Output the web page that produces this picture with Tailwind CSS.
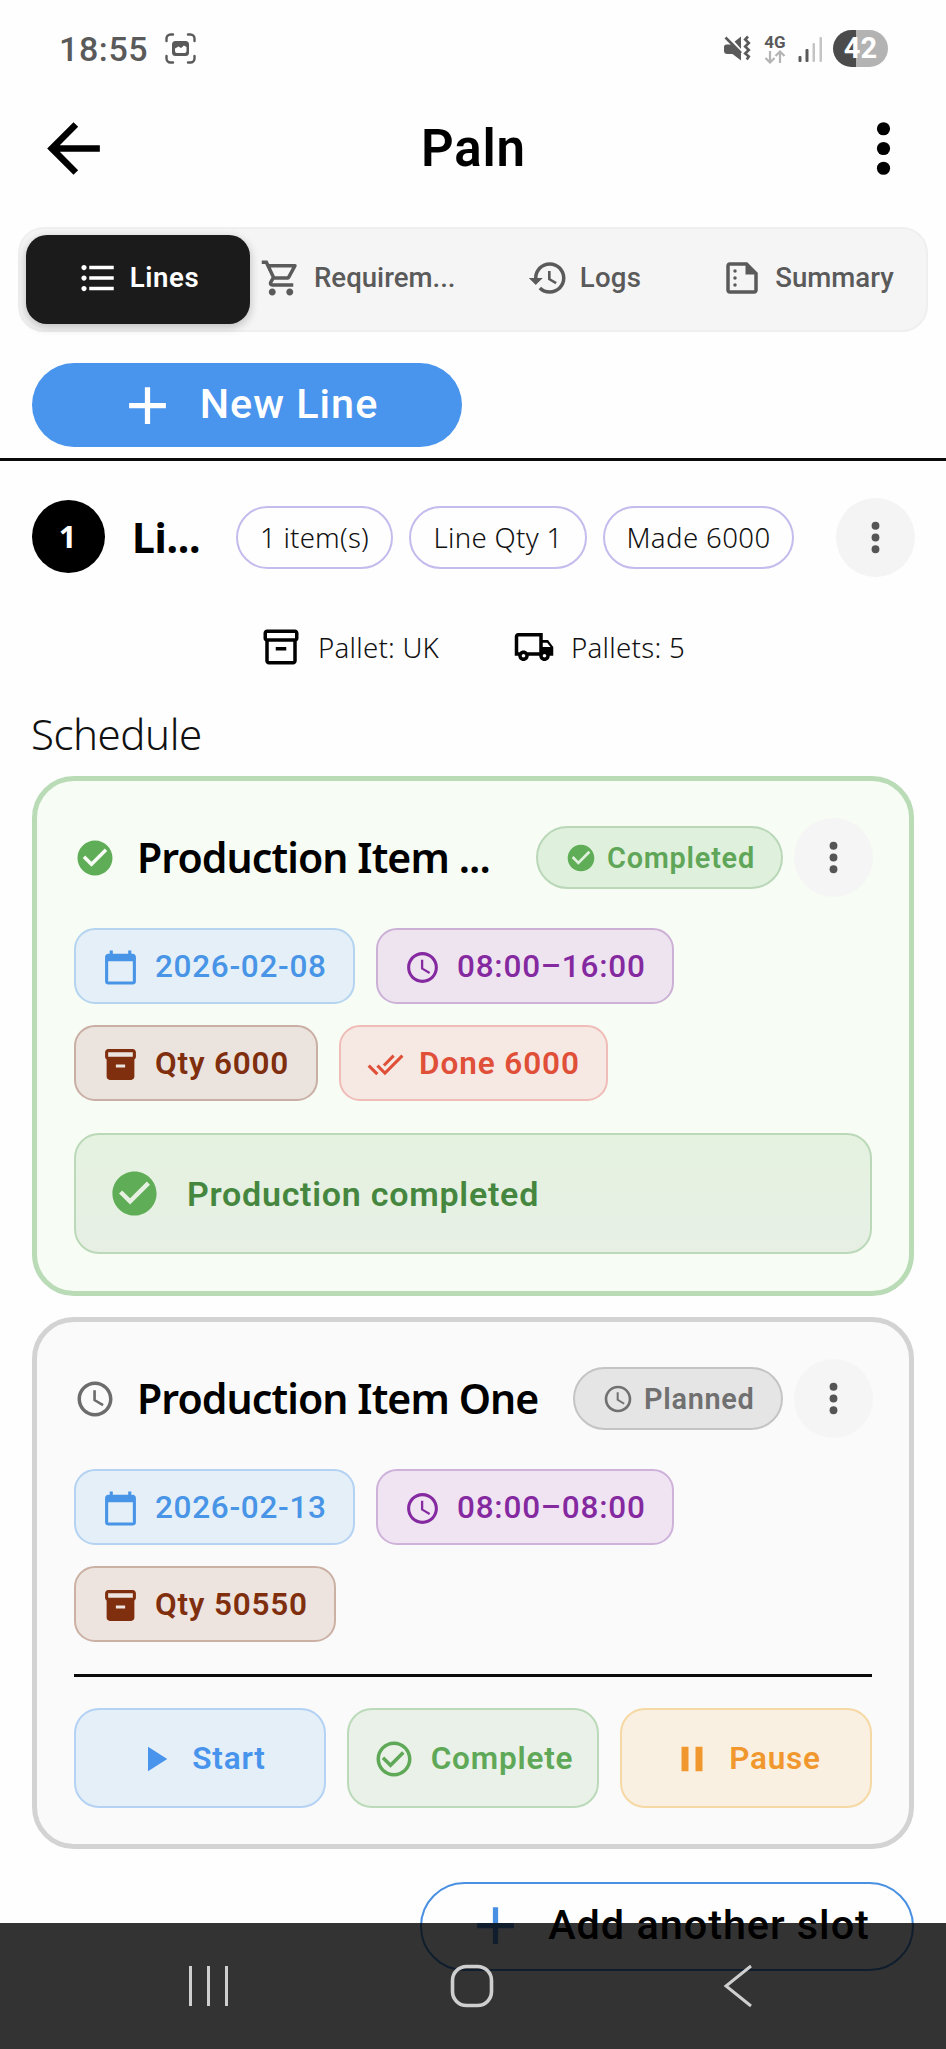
<!DOCTYPE html>
<html lang="en">
<head>
<meta charset="utf-8">
<title>Paln</title>
<script src="https://cdn.jsdelivr.net/npm/@tailwindcss/browser@4"></script>
</head>
<body class="bg-white">
<svg class="hidden" aria-hidden="true">
  <symbol id="back" viewBox="0 0 24 24"><path d="M20 11H7.83l5.59-5.59L12 4l-8 8 8 8 1.41-1.41L7.83 13H20v-2z"/></symbol>
  <symbol id="more" viewBox="0 0 24 24"><circle cx="12" cy="6" r="2"/><circle cx="12" cy="12" r="2"/><circle cx="12" cy="18" r="2"/></symbol>
  <symbol id="list" viewBox="0 0 24 24"><path d="M4 10.5c-.83 0-1.5.67-1.5 1.5s.67 1.5 1.5 1.5 1.5-.67 1.5-1.5-.67-1.5-1.5-1.5zm0-6c-.83 0-1.5.67-1.5 1.5S3.17 7.5 4 7.5 5.5 6.83 5.5 6 4.83 4.5 4 4.5zm0 12c-.83 0-1.5.68-1.5 1.5s.68 1.5 1.5 1.5 1.5-.68 1.5-1.5-.67-1.5-1.5-1.5zM7 19h14v-2H7v2zm0-6h14v-2H7v2zm0-8v2h14V5H7z"/></symbol>
  <symbol id="cart" viewBox="0 0 24 24"><path d="M15.55 13c.75 0 1.41-.41 1.75-1.03l3.58-6.49c.37-.66-.11-1.48-.87-1.48H5.21l-.94-2H1v2h2l3.6 7.59-1.35 2.44C4.52 15.37 5.48 17 7 17h12v-2H7l1.1-2h7.45zM6.16 6h12.15l-2.76 5H8.53L6.16 6zM7 18c-1.1 0-1.99.9-1.99 2S5.9 22 7 22s2-.9 2-2-.9-2-2-2zm10 0c-1.1 0-1.99.9-1.99 2s.89 2 1.99 2 2-.9 2-2-.9-2-2-2z"/></symbol>
  <symbol id="history" viewBox="0 0 24 24"><path d="M13 3c-4.97 0-9 4.03-9 9H1l3.89 3.89.07.14L9 12H6c0-3.87 3.13-7 7-7s7 3.13 7 7-3.13 7-7 7c-1.93 0-3.68-.79-4.94-2.06l-1.42 1.42C8.27 19.99 10.51 21 13 21c4.97 0 9-4.03 9-9s-4.03-9-9-9zm-1 5v5l4.28 2.54.72-1.21-3.5-2.08V8H12z"/></symbol>
  <symbol id="summary" viewBox="0 0 24 24"><path d="M15 3H5c-1.1 0-1.99.9-1.99 2L3 19c0 1.1.89 2 1.99 2H19c1.1 0 2-.9 2-2V9l-6-6zM5 19V5h9v5h5v9H5z"/><circle cx="8" cy="8" r="1"/><circle cx="8" cy="12" r="1"/><circle cx="8" cy="16" r="1"/></symbol>
  <symbol id="add" viewBox="0 0 24 24"><path d="M19 13h-6v6h-2v-6H5v-2h6V5h2v6h6v2z"/></symbol>
  <symbol id="box" viewBox="0 0 24 24"><path d="M20 2H4c-1 0-2 .9-2 2v3.01c0 .72.43 1.34 1 1.69V20c0 1.1 1.1 2 2 2h14c.9 0 2-.9 2-2V8.7c.57-.35 1-.97 1-1.69V4c0-1.1-1-2-2-2zm-1 18H5V9h14v11zm1-13H4V4h16v3z"/><path d="M9 12h6v2H9z"/></symbol>
  <symbol id="boxfill" viewBox="0 0 24 24"><path d="M20 2H4c-1 0-2 .9-2 2v3.01c0 .72.43 1.34 1 1.69V20c0 1.1 1.1 2 2 2h14c.9 0 2-.9 2-2V8.7c.57-.35 1-.97 1-1.69V4c0-1.1-1-2-2-2zm-5 12H9v-2h6v2zm5-7H4V4h16v3z"/></symbol>
  <symbol id="truck" viewBox="0 0 24 24"><path d="M20 8h-3V4H3c-1.1 0-2 .9-2 2v11h2c0 1.66 1.34 3 3 3s3-1.34 3-3h6c0 1.66 1.34 3 3 3s3-1.34 3-3h2v-5l-3-4zm-.5 1.5l1.96 2.5H17V9.5h2.5zM6 18c-.55 0-1-.45-1-1s.45-1 1-1 1 .45 1 1-.45 1-1 1zm2.22-3c-.55-.61-1.33-1-2.22-1s-1.67.39-2.22 1H3V6h12v9H8.22zM18 18c-.55 0-1-.45-1-1s.45-1 1-1 1 .45 1 1-.45 1-1 1z"/></symbol>
  <symbol id="check" viewBox="0 0 24 24"><path d="M12 2C6.48 2 2 6.48 2 12s4.48 10 10 10 10-4.48 10-10S17.52 2 12 2zm-2 15l-5-5 1.41-1.41L10 14.17l7.59-7.59L19 8l-9 9z"/></symbol>
  <symbol id="checkline" viewBox="0 0 24 24"><path d="M16.59 7.58L10 14.17l-3.59-3.58L5 12l5 5 8-8zM12 2C6.48 2 2 6.48 2 12s4.48 10 10 10 10-4.48 10-10S17.52 2 12 2zm0 18c-4.42 0-8-3.58-8-8s3.58-8 8-8 8 3.58 8 8-3.58 8-8 8z"/></symbol>
  <symbol id="clock" viewBox="0 0 24 24"><path d="M11.99 2C6.47 2 2 6.48 2 12s4.47 10 9.99 10C17.52 22 22 17.52 22 12S17.52 2 11.99 2zM12 20c-4.42 0-8-3.58-8-8s3.58-8 8-8 8 3.58 8 8-3.58 8-8 8zm.5-13H11v6l5.25 3.15.75-1.23-4.5-2.67V7z"/></symbol>
  <symbol id="calendar" viewBox="0 0 24 24"><path d="M20 3h-1V1h-2v2H7V1H5v2H4c-1.1 0-2 .9-2 2v16c0 1.1.9 2 2 2h16c1.1 0 2-.9 2-2V5c0-1.1-.9-2-2-2zm0 18H4V8h16v13z"/></symbol>
  <symbol id="doneall" viewBox="0 0 24 24"><path d="M18 7l-1.41-1.41-6.34 6.34 1.41 1.41L18 7zm4.24-1.41L11.66 16.17 7.48 12l-1.41 1.41L11.66 19l12-12-1.42-1.41zM.41 13.41L6 19l1.41-1.41L1.83 12 .41 13.41z"/></symbol>
  <symbol id="play" viewBox="0 0 24 24"><path d="M8 5v14l11-7z"/></symbol>
  <symbol id="pause" viewBox="0 0 24 24"><path d="M6 19h4V5H6v14zm8-14v14h4V5h-4z"/></symbol>
</svg>

<div class="relative h-[2049px] w-[946px] overflow-hidden bg-[#fefefe] font-['Roboto',sans-serif] whitespace-nowrap">

  <!-- status bar -->
  <div class="flex h-[97px] items-center pl-[59px] pr-[58px] text-[#5a5a5a]">
    <span class="w-[106px] text-[34px] leading-none font-medium tracking-[0.6px]">18:55</span>
    <svg class="size-[31px]" viewBox="0 0 31 31" fill="none" stroke="currentColor" stroke-width="2.4" stroke-linecap="round"><path d="M1.5 8V5.500a4 4 0 0 1 4-4H8M23 1.500h2.500a4 4 0 0 1 4 4V8M29.500 23v2.500a4 4 0 0 1-4 4H23M8 29.500H5.500a4 4 0 0 1-4-4V23"/><rect x="7" y="8" width="17" height="15" rx="3.500" fill="currentColor" stroke="none"/><path d="M10 15.500l3.500-2 2.500 1.500 3-2.500 2.500 1.500v4q0 2-2 2h-7.500q-2 0-2-2z" fill="#fefefe" stroke="none"/></svg>
    <div class="ml-auto flex items-center">
      <svg class="h-[27px] w-[28px]" viewBox="0 0 28 27"><path d="M1 12q0-2.500 2.500-2.500H8l10-8v24L9.500 19H4.500Q1 19 1 16z" fill="currentColor"/><path d="M2 -2L20 18.500" stroke="#fefefe" stroke-width="3"/><path d="M2.500 2.500L18 18" stroke="currentColor" stroke-width="2.600"/><path d="M25 1.500l-2.800 3 3.600 3.500-3.600 3.500 3.600 3.500-3.600 3.500 3.600 3-2 3" fill="none" stroke="currentColor" stroke-width="2.600"/></svg>
      <div class="ml-[12px] flex w-[24px] flex-col items-center">
        <span class="text-[17px] leading-[16px] font-bold">4G</span>
        <svg class="h-[14px] w-[22px]" viewBox="0 0 22 14" fill="none" stroke="#b4b4b4" stroke-width="2.200"><path d="M6 1v11M1.500 8L6 12.500 10.500 8M16 13V2M11.500 6L16 1.500 20.500 6"/></svg>
      </div>
      <svg class="ml-[11px] h-[26px] w-[25px]" viewBox="0 0 25 26"><rect x="0.500" y="20" width="3" height="6" rx="1" fill="#5a5a5a"/><rect x="7.500" y="13" width="3" height="13" rx="1" fill="#5a5a5a"/><rect x="14.500" y="7" width="2.500" height="19" rx="1" fill="#c4c4c4"/><rect x="21.500" y="1" width="2.500" height="25" rx="1" fill="#c4c4c4"/></svg>
      <div class="ml-[10px] flex h-[37px] w-[55px] items-center justify-center rounded-full bg-linear-to-r from-[#4b4b4b] from-42% to-[#b3b3b3] to-42% text-[29px] leading-none font-bold text-white">42</div>
    </div>
  </div>

  <!-- app bar -->
  <div class="flex h-[102px] items-center justify-between pl-[34px] pr-[23px]">
    <svg class="size-[79px]"><use href="#back"/></svg>
    <h1 class="pr-[10px] text-[51px] leading-none font-semibold tracking-[0.8px]">Paln</h1>
    <svg class="size-[79px]"><use href="#more"/></svg>
  </div>

  <!-- tabs -->
  <div class="mx-[18px] mt-[28px] flex h-[105px] items-center rounded-[26px] border-2 border-[#efefef] bg-[#f5f5f5] px-[6px] text-[27.6px] leading-none font-medium text-[#5a5a5a]">
    <div class="flex h-[89px] w-[224px] items-center justify-center gap-[11px] rounded-[21px] bg-[#1b1b1b] pb-[4px] font-semibold tracking-[0.6px] text-white shadow-[0_3px_9px_1px_rgba(0,0,0,0.2)]"><svg class="size-[42px] fill-current"><use href="#list"/></svg>Lines</div>
    <div class="flex w-[223px] items-center gap-[12px] pb-[4px] pl-[10px]"><svg class="size-[42px] fill-current"><use href="#cart"/></svg>Requirem...</div>
    <div class="flex w-[222px] items-center justify-center gap-[11px] pb-[4px] tracking-[0.27px]"><svg class="size-[42px] fill-current"><use href="#history"/></svg>Logs</div>
    <div class="flex flex-1 items-center justify-center gap-[12px] pb-[4px]"><svg class="size-[42px] fill-current"><use href="#summary"/></svg>Summary</div>
  </div>

  <button class="mt-[31px] ml-[32px] flex h-[84px] w-[430px] items-center justify-center gap-[21px] rounded-full bg-[#4994ec] text-[41.4px] leading-none font-medium tracking-[1px] text-white"><svg class="size-[63px] fill-current"><use href="#add"/></svg>New Line</button>
  <div class="mt-[11px] h-[3px] bg-[#0a0a0a]"></div>

  <!-- line header -->
  <div class="mt-[37px] flex h-[79px] items-center pl-[32px] pr-[31px] font-['Noto_Sans',sans-serif]">
    <div class="mb-[2px] flex size-[73px] items-center justify-center rounded-full bg-black pr-[2px] text-[31px] leading-none font-bold text-white">1</div>
    <div class="ml-[27px] w-[104px] text-[41px] leading-none font-bold tracking-[-0.3px]">Li...</div>
    <div class="flex gap-[16px] text-[27.6px] leading-none font-light text-[#111]">
      <div class="flex h-[63px] w-[157px] items-center justify-center rounded-full border-[2.6px] border-[#c5bbec] tracking-[0.22px]">1 item(s)</div>
      <div class="flex h-[63px] w-[178px] items-center justify-center rounded-full border-[2.6px] border-[#c5bbec] tracking-[0.3px]">Line Qty 1</div>
      <div class="flex h-[63px] w-[191px] items-center justify-center rounded-full border-[2.6px] border-[#c5bbec] tracking-[0.37px]">Made 6000</div>
    </div>
    <div class="ml-auto flex size-[79px] items-center justify-center rounded-full bg-[#f4f4f4]"><svg class="size-[47px] fill-[#555]"><use href="#more"/></svg></div>
  </div>

  <div class="mt-[49px] flex h-[42px] items-center pl-[260px] font-['Noto_Sans',sans-serif] text-[27.6px] leading-none font-light text-[#111]">
    <svg class="mr-[16px] size-[42px]"><use href="#box"/></svg><span class="w-[195px] pt-[2px] tracking-[0.25px]">Pallet: UK</span>
    <svg class="mr-[16px] size-[42px]"><use href="#truck"/></svg><span class="pt-[2px] tracking-[0.29px]">Pallets: 5</span>
  </div>

  <h2 class="mt-[36px] ml-[31px] h-[60px] font-['Noto_Sans',sans-serif] text-[42px] leading-[60px] font-light tracking-[-0.45px] text-[#111]">Schedule</h2>

  <!-- completed slot -->
  <section class="mx-[32px] mt-[12px] h-[520px] rounded-[42px] border-[5px] border-[#b9dbb6] bg-[#f7fcf5] px-[37px] pt-[37px]">
    <div class="flex h-[79px] items-center">
      <svg class="size-[42px] fill-[#5fad56]"><use href="#check"/></svg>
      <h3 class="ml-[21px] font-['Noto_Sans',sans-serif] text-[41px] leading-none font-semibold tracking-[-0.9px] text-black">Production Item ...</h3>
      <div class="ml-auto flex h-[63px] w-[247px] items-center gap-[10px] rounded-full border-2 border-[#bad7b8] bg-[#dff0dd] pt-[1px] pl-[27px] text-[28.9px] leading-none font-semibold tracking-[0.75px] text-[#5fa658]"><svg class="size-[32px] fill-[#5fad56]"><use href="#check"/></svg>Completed</div>
      <div class="-mr-px ml-[11px] flex size-[79px] items-center justify-center rounded-full bg-[#f5f5f5]"><svg class="size-[47px] fill-[#555]"><use href="#more"/></svg></div>
    </div>
    <div class="mt-[31px] flex flex-wrap gap-[21px] text-[31.5px] leading-none font-medium">
      <div class="flex h-[76px] w-[281px] items-center gap-[16px] rounded-[21px] border-2 border-[#b4d4f0] bg-[#e4eff7] pt-[2px] pl-[26px] tracking-[0.7px] text-[#4894e6]"><svg class="size-[37px] fill-current"><use href="#calendar"/></svg>2026-02-08</div>
      <div class="flex h-[76px] w-[298px] items-center gap-[16px] rounded-[21px] border-2 border-[#ccb0d6] bg-[#eee4f0] pt-[2px] pl-[26px] tracking-[0.78px] text-[#8529a0]"><svg class="size-[37px] fill-current"><use href="#clock"/></svg>08:00–16:00</div>
      <div class="flex h-[76px] w-[244px] items-center gap-[16px] rounded-[21px] border-2 border-[#c9aea4] bg-[#ebe4de] pt-[2px] pl-[26px] font-semibold tracking-[0.8px] text-[#7f2f0e]"><svg class="size-[37px] fill-current"><use href="#boxfill"/></svg>Qty 6000</div>
      <div class="flex h-[76px] w-[269px] items-center gap-[15px] rounded-[21px] border-2 border-[#f0bcb8] bg-[#f6e9e4] pt-[2px] pl-[26px] font-semibold tracking-[0.91px] text-[#e04f38]"><svg class="size-[37px] fill-current"><use href="#doneall"/></svg>Done 6000</div>
    </div>
    <div class="mt-[32px] flex h-[121px] items-center gap-[26px] rounded-[25px] border-2 border-[#bbd9b9] bg-linear-to-b from-[#e5f2e0] to-[#e7efe5] pl-[32px] text-[34px] leading-none font-semibold tracking-[0.74px] text-[#468740]"><svg class="size-[53px] fill-[#5fad56]"><use href="#check"/></svg>Production completed</div>
  </section>

  <!-- planned slot -->
  <section class="mx-[32px] mt-[21px] h-[532px] rounded-[42px] border-[5px] border-[#d3d3d3] bg-[#fafafa] px-[37px] pt-[37px]">
    <div class="flex h-[79px] items-center">
      <svg class="size-[42px] fill-[#6c6c6c]"><use href="#clock"/></svg>
      <h3 class="ml-[21px] font-['Noto_Sans',sans-serif] text-[41px] leading-none font-semibold tracking-[-0.9px] text-black">Production Item One</h3>
      <div class="ml-auto flex h-[63px] w-[210px] items-center gap-[10px] rounded-full border-2 border-[#c4c4c4] bg-[#e5e5e5] pt-[1px] pl-[27px] text-[28.9px] leading-none font-semibold tracking-[0.7px] text-[#707070]"><svg class="size-[32px] fill-current"><use href="#clock"/></svg>Planned</div>
      <div class="-mr-px ml-[11px] flex size-[79px] items-center justify-center rounded-full bg-[#f5f5f5]"><svg class="size-[47px] fill-[#555]"><use href="#more"/></svg></div>
    </div>
    <div class="mt-[31px] flex flex-wrap gap-[21px] text-[31.5px] leading-none font-medium">
      <div class="flex h-[76px] w-[281px] items-center gap-[16px] rounded-[21px] border-2 border-[#b4d2f2] bg-[#e4eff8] pt-[2px] pl-[26px] tracking-[0.7px] text-[#4894e6]"><svg class="size-[37px] fill-current"><use href="#calendar"/></svg>2026-02-13</div>
      <div class="flex h-[76px] w-[298px] items-center gap-[16px] rounded-[21px] border-2 border-[#ceb2da] bg-[#f0e4f3] pt-[2px] pl-[26px] tracking-[0.78px] text-[#8529a0]"><svg class="size-[37px] fill-current"><use href="#clock"/></svg>08:00–08:00</div>
      <div class="flex h-[76px] w-[262px] items-center gap-[16px] rounded-[21px] border-2 border-[#cbb0a4] bg-[#ede4df] pt-[2px] pl-[26px] font-semibold tracking-[0.78px] text-[#7f2f0e]"><svg class="size-[37px] fill-current"><use href="#boxfill"/></svg>Qty 50550</div>
    </div>
    <div class="mt-[32px] h-[3px] bg-[#0a0a0a]"></div>
    <div class="mt-[31px] grid grid-cols-3 gap-[21px] text-[31.5px] leading-none font-semibold tracking-[0.8px]">
      <button class="flex h-[100px] items-center justify-center gap-[16px] rounded-[25px] border-2 border-[#b4d2f4] bg-[#e4eff8] pt-[2px] text-[#4894ec]"><svg class="size-[42px] fill-current"><use href="#play"/></svg>Start</button>
      <button class="flex h-[100px] items-center justify-center gap-[16px] rounded-[25px] border-2 border-[#bbdab9] bg-[#e9f1e8] pt-[2px] text-[#5fa858]"><svg class="size-[42px] fill-current"><use href="#checkline"/></svg>Complete</button>
      <button class="flex h-[100px] items-center justify-center gap-[16px] rounded-[25px] border-2 border-[#f5d8a4] bg-[#faf0e2] pt-[2px] text-[#f0982e]"><svg class="size-[42px] fill-current"><use href="#pause"/></svg>Pause</button>
    </div>
  </section>

  <button class="mt-[33px] ml-[420px] flex h-[89px] w-[494px] items-center justify-center gap-[21px] rounded-full border-[2.6px] border-[#4a90e2] pb-[2px] text-[41.4px] leading-none font-medium tracking-[0.97px] text-black"><svg class="size-[63px] fill-[#4a90e2]"><use href="#add"/></svg>Add another slot</button>

  <!-- translucent system navigation bar -->
  <div class="absolute inset-x-0 bottom-0 flex h-[126px] items-center justify-between bg-black/80 pl-[187px] pr-[192px] text-[#cfcfcf]">
    <svg class="h-[44px] w-[43px]" viewBox="0 0 43 44" stroke="currentColor" stroke-width="3"><path d="M3.500 2v40M21.500 2v40M39.500 2v40"/></svg>
    <svg class="mr-[8px] size-[44px]" viewBox="0 0 44 44" fill="none" stroke="currentColor" stroke-width="3.600"><rect x="2.500" y="2.500" width="39" height="39" rx="14"/></svg>
    <svg class="h-[44px] w-[32px]" viewBox="0 0 32 44" fill="none" stroke="currentColor" stroke-width="3"><path d="M29 2L4 22l25 20"/></svg>
  </div>
</div>
</body>
</html>
